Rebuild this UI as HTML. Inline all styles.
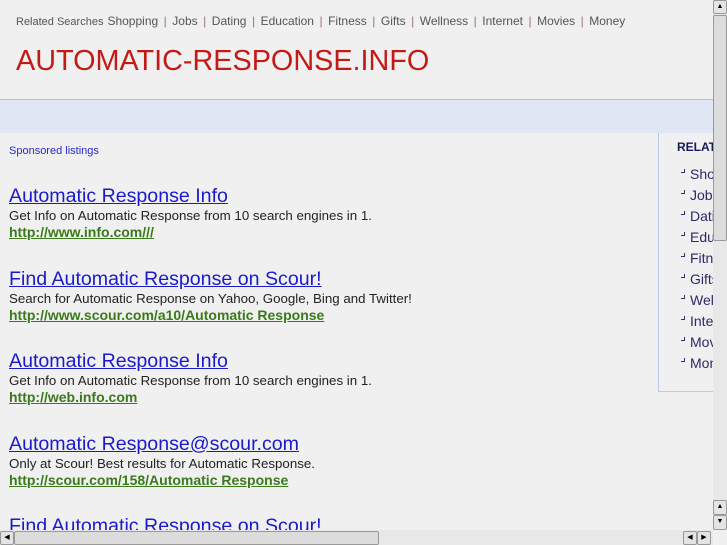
<!DOCTYPE html>
<html><head><style>
body{margin:0;width:727px;height:545px;overflow:hidden;background:#f0f0f0;font-family:"Liberation Sans",sans-serif;position:relative}
.a{position:absolute;white-space:nowrap}
.nav{left:16px;top:14px;font-size:12px;color:#555}
.nav .l{font-size:11px;margin-right:4px}
.nav i{font-style:normal;color:#a07090;margin:0 5.5px}
.title{left:16px;top:45px;font-size:28.8px;color:#c41a16}
.band{left:0;top:99px;width:713px;height:33px;background:#e0e6f4;border-top:1px solid #b2c0e0}
.side{left:658px;top:133px;width:60px;height:258px;border-left:1px solid #b8c8e8;border-bottom:1px solid #b8c8e8}
.sh{left:677px;top:140px;font-size:12px;font-weight:bold;color:#1a1a55}
.si{left:681px;font-size:14px;color:#2a2a66}
.si:before{content:"";display:inline-block;width:3px;height:3px;border-right:1px solid #336;border-bottom:1px solid #336;margin-right:5px;vertical-align:6px}
.sp{left:9px;top:145px;font-size:11px;color:#2828cc}
.r{left:9px}
.r .t{font-size:19.6px;color:#1a1acc;text-decoration:underline;line-height:22px}
.r .d{font-size:13.3px;color:#222;line-height:17px}
.r .u{font-size:14px;color:#3a7a1a;font-weight:bold;text-decoration:underline;line-height:17px}
.vs{left:713px;top:0;width:14px;height:530px;background:#e8e8e8}
.hs{left:0;top:530px;width:713px;height:15px;background:#e8e8e8}
.th{background:#dcdcdc;border:1px solid #999;border-radius:2px;position:absolute}
.bt{position:absolute;background:#e4e4e4;border:1px solid #999;border-radius:2px;font-size:7px;text-align:center;line-height:12px;color:#000}
</style></head><body>
<div class="a nav"><span class="l">Related Searches</span>Shopping<i>|</i>Jobs<i>|</i>Dating<i>|</i>Education<i>|</i>Fitness<i>|</i>Gifts<i>|</i>Wellness<i>|</i>Internet<i>|</i>Movies<i>|</i>Money</div>
<div class="a title">AUTOMATIC-RESPONSE.INFO</div>
<div class="a band"></div>
<div class="a side"></div>
<div class="a sh">RELATED</div>
<div class="a si" style="top:166px">Shopping</div>
<div class="a si" style="top:187px">Jobs</div>
<div class="a si" style="top:208px">Dating</div>
<div class="a si" style="top:229px">Education</div>
<div class="a si" style="top:250px">Fitness</div>
<div class="a si" style="top:271px">Gifts</div>
<div class="a si" style="top:292px">Wellness</div>
<div class="a si" style="top:313px">Internet</div>
<div class="a si" style="top:334px">Movies</div>
<div class="a si" style="top:355px">Money</div>
<div class="a sp">Sponsored listings</div>
<div class="a r" style="top:185px"><div class="t">Automatic Response Info</div><div class="d">Get Info on Automatic Response from 10 search engines in 1.</div><div class="u">http://www.info.com///</div></div>
<div class="a r" style="top:268px"><div class="t">Find Automatic Response on Scour!</div><div class="d">Search for Automatic Response on Yahoo, Google, Bing and Twitter!</div><div class="u">http://www.scour.com/a10/Automatic Response</div></div>
<div class="a r" style="top:350px"><div class="t">Automatic Response Info</div><div class="d">Get Info on Automatic Response from 10 search engines in 1.</div><div class="u">http://web.info.com</div></div>
<div class="a r" style="top:433px"><div class="t">Automatic Response@scour.com</div><div class="d">Only at Scour! Best results for Automatic Response.</div><div class="u">http://scour.com/158/Automatic Response</div></div>
<div class="a r" style="top:515px"><div class="t">Find Automatic Response on Scour!</div></div>
<div class="a vs"><div class="bt" style="left:0;top:0;width:12px;height:12px">▲</div><div class="th" style="left:0;top:15px;width:12px;height:224px"></div><div class="bt" style="left:0;top:500px;width:12px;height:13px">▲</div><div class="bt" style="left:0;top:515px;width:12px;height:13px">▼</div></div>
<div class="a hs"><div class="bt" style="left:0;top:1px;width:12px;height:12px">◀</div><div class="th" style="left:14px;top:1px;width:363px;height:12px"></div><div class="bt" style="left:683px;top:1px;width:12px;height:12px">◀</div><div class="bt" style="left:697px;top:1px;width:12px;height:12px">▶</div></div>
</body></html>
